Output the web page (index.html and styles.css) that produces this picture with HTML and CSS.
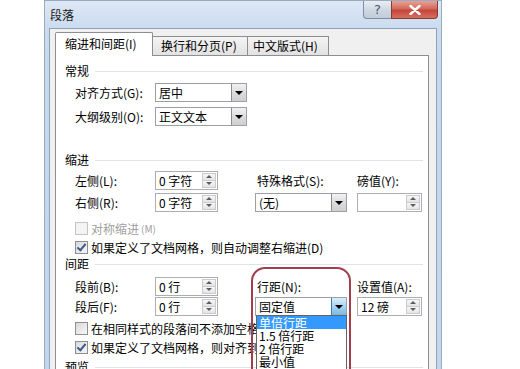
FILE: index.html
```html
<!DOCTYPE html>
<html>
<head>
  <meta charset="utf-8">
  <title>段落</title>
  <link rel="stylesheet" href="styles.css">
</head>
<body>
  <div class="window">
    <div class="titlebar">
      <span class="title">段落</span>
      <div class="caption">
        <span class="help">?</span>
        <span class="close">
          <svg width="12" height="10" viewBox="0 0 12 10"><path d="M1.5 1 L10.5 9 M10.5 1 L1.5 9" stroke="#fff" stroke-width="2.4" stroke-linecap="round"/></svg>
        </span>
      </div>
    </div>

    <div class="client">
      <div class="tabs">
        <div class="tab active">缩进和间距(I)</div>
        <div class="tab t2">换行和分页(P)</div>
        <div class="tab t3">中文版式(H)</div>
      </div>

      <div class="panel">
        <div class="group g1"><span>常规</span></div>
        <div class="row r24">
          <span class="lbl">对齐方式(G):</span>
          <div class="combo"><span>居中</span><i class="drop"></i></div>
        </div>
        <div class="row r24">
          <span class="lbl">大纲级别(O):</span>
          <div class="combo"><span>正文文本</span><i class="drop"></i></div>
        </div>

        <div class="group g2"><span>缩进</span></div>
        <div class="row r22 first">
          <span class="lbl">左侧(L):</span>
          <div class="c1"><div class="spin"><span>0 字符</span><i class="arrows"><b></b><b></b></i></div></div>
          <span class="c2 lbl2">特殊格式(S):</span>
          <span class="c3">磅值(Y):</span>
        </div>
        <div class="row r22">
          <span class="lbl">右侧(R):</span>
          <div class="c1"><div class="spin"><span>0 字符</span><i class="arrows"><b></b><b></b></i></div></div>
          <div class="c2"><div class="combo"><span>(无)</span><i class="drop"></i></div></div>
          <div class="c3"><div class="spin wide"><span></span><i class="arrows"><b></b><b></b></i></div></div>
        </div>
        <div class="check disabled cb-first"><i class="box"></i>对称缩进<small>(M)</small></div>
        <div class="check"><i class="box on"></i>如果定义了文档网格，则自动调整右缩进(D)</div>

        <div class="group g3"><span>间距</span></div>
        <div class="row r20 first2">
          <span class="lbl">段前(B):</span>
          <div class="c1"><div class="spin"><span>0 行</span><i class="arrows"><b></b><b></b></i></div></div>
          <span class="c2 lbl2">行距(N):</span>
          <span class="c3">设置值(A):</span>
        </div>
        <div class="row r20">
          <span class="lbl">段后(F):</span>
          <div class="c1"><div class="spin"><span>0 行</span><i class="arrows"><b></b><b></b></i></div></div>
          <div class="c2 holder">
            <div class="combo open"><span>固定值</span><i class="drop"></i></div>
            <ul class="list">
              <li class="sel">单倍行距</li>
              <li>1.5 倍行距</li>
              <li>2 倍行距</li>
              <li>最小值</li>
              <li>固定值</li>
            </ul>
          </div>
          <div class="c3"><div class="spin wide"><span>12 磅</span><i class="arrows"><b></b><b></b></i></div></div>
        </div>
        <div class="check cb-second"><i class="box"></i>在相同样式的段落间不添加空格(C)</div>
        <div class="check"><i class="box on"></i>如果定义了文档网格，则对齐到网格(W)</div>

        <div class="group g4"><span>预览</span></div>
      </div>
    </div>
  </div>

  <div class="mark"></div>
</body>
</html>
```

FILE: styles.css
```css
html, body {
  margin: 0;
  padding: 0;
  height: 100%;
  overflow: hidden;
  background: #fff;
  font-family: "Noto Sans CJK SC", "Liberation Sans", sans-serif;
  font-size: 12px;
  color: #000;
}

body {
  position: relative;
}

.window {
  margin-left: 44px;
  width: 398px;
  height: 420px;
  box-sizing: border-box;
  border: 1px solid #9aabbf;
  border-bottom: none;
  background: linear-gradient(to bottom, #dde8f5 0, #cbdcef 27px, #c6d8ec 60px, #c3d6eb 100%);
  display: flex;
  flex-direction: column;
}

.titlebar {
  height: 27px;
  display: flex;
  justify-content: space-between;
  align-items: flex-start;
  padding: 0 3px 0 5px;
}

.title {
  line-height: 27px;
  color: #1b1b1b;
}

.caption {
  display: flex;
}

.help, .close {
  height: 18px;
  box-sizing: border-box;
  display: flex;
  align-items: center;
  justify-content: center;
}

.help {
  width: 28px;
  border: 1px solid #7f8fa3;
  border-top: none;
  border-right: none;
  border-radius: 0 0 0 4px;
  background: linear-gradient(to bottom, #e9eef4, #cdd7e2 55%, #c0ccd9);
  color: #4b586a;
  font-size: 13px;
  font-family: "DejaVu Sans", sans-serif;
}

.close {
  width: 47px;
  border: 1px solid #8a3a34;
  border-top: none;
  border-radius: 0 0 4px 0;
  background: linear-gradient(to bottom, #e6a396, #d36a5b 45%, #c5463a 55%, #d4705f);
}

.client {
  flex: 1;
  margin: 0 4px;
  border: 1px solid #8ea2ba;
  border-bottom: none;
  background: #f0f0f0;
  padding: 3px 0 0 5px;
}

.tabs {
  height: 23px;
  display: flex;
  align-items: flex-end;
}

.tab {
  height: 19px;
  box-sizing: border-box;
  border: 1px solid #8c8e94;
  border-bottom: none;
  background: linear-gradient(to bottom, #f4f4f4, #e2e2e2);
  line-height: 18px;
  padding-left: 8px;
}

.tab.active {
  width: 98px;
  height: 24px;
  margin-bottom: -1px;
  background: #fff;
  padding-left: 9px;
  line-height: 21px;
  position: relative;
  z-index: 1;
  border-radius: 2px 2px 0 0;
}

.tab.t2 {
  width: 95px;
  border-left: none;
}

.tab.t3 {
  width: 81px;
  border-left: none;
  padding-left: 5px;
}

.panel {
  width: 374px;
  height: 380px;
  box-sizing: border-box;
  border: 1px solid #8c8e94;
  background: #fff;
}

.group {
  height: 14px;
  display: flex;
  align-items: center;
  margin: 0 5px 0 9px;
  line-height: 14px;
}

.group::after {
  content: "";
  flex: 1;
  height: 1px;
  margin-left: 6px;
  background: #dde3e8;
}

.g1 { margin-top: 8px; }
.g2 { margin-top: 25px; }
.g3 { margin-top: 0; }
.g4 { margin-top: 3px; }

.row {
  display: flex;
  align-items: center;
  padding-left: 19px;
}

.r24 { height: 24px; }
.r22 { height: 22px; }
.r20 { height: 20px; }
.r24:nth-of-type(2) { margin-top: 2px; }
.first { margin-top: 2px; }
.first2 { margin-top: 5px; }

.lbl {
  width: 80px;
  flex: none;
}

.c1 {
  width: 100px;
  flex: none;
}

.c2 {
  width: 102px;
  flex: none;
}

.lbl2 {
  padding-left: 2px;
  box-sizing: border-box;
}

.c3 {
  flex: none;
}

.combo {
  width: 92px;
  height: 19px;
  box-sizing: border-box;
  border: 1px solid #9c9fa5;
  background: #fff;
  display: flex;
}

.combo span {
  flex: 1;
  padding-left: 3px;
  line-height: 17px;
}

.drop {
  width: 15px;
  box-sizing: border-box;
  border-left: 1px solid #8a8d92;
  background: linear-gradient(to bottom, #f2f2f2, #dcdcdc 50%, #cfcfcf);
  display: flex;
  align-items: center;
  justify-content: center;
}

.drop::after {
  content: "";
  border-left: 4px solid transparent;
  border-right: 4px solid transparent;
  border-top: 4px solid #000;
  margin-top: 1px;
}

.combo.open .drop {
  border-left-color: #3c7fb1;
  background: linear-gradient(to bottom, #dbeefa, #a6d3f0 50%, #7cb8e4);
}

.spin {
  width: 63px;
  height: 19px;
  box-sizing: border-box;
  border: 1px solid #abadb3;
  background: #fff;
  display: flex;
}

.spin.wide {
  width: 65px;
}

.spin span {
  flex: 1;
  padding-left: 3px;
  line-height: 17px;
}

.arrows {
  width: 14px;
  margin: 1px 1px 1px 0;
  display: flex;
  flex-direction: column;
}

.arrows b {
  flex: 1;
  border: 1px solid #c9cbcf;
  background: linear-gradient(to bottom, #f7f7f7, #e4e4e4);
  display: flex;
  align-items: center;
  justify-content: center;
}

.arrows b + b {
  border-top: none;
}

.arrows b::after {
  content: "";
  border-left: 3px solid transparent;
  border-right: 3px solid transparent;
  border-bottom: 3px solid #5d5d5d;
}

.arrows b + b::after {
  border-bottom: none;
  border-top: 3px solid #5d5d5d;
}

.check {
  height: 19px;
  display: flex;
  align-items: center;
  padding-left: 19px;
  white-space: nowrap;
}

.cb-first { margin-top: 6px; }
.cb-second { margin-top: 3px; }

.box {
  width: 13px;
  height: 13px;
  box-sizing: border-box;
  border: 1px solid #8e8f8f;
  background: linear-gradient(135deg, #dadada, #f6f6f6);
  margin-right: 3px;
  flex: none;
  position: relative;
}

.box.on::after {
  content: "";
  position: absolute;
  left: 3px;
  top: 0;
  width: 3px;
  height: 7px;
  border: solid #3d5a8a;
  border-width: 0 2px 2px 0;
  transform: rotate(40deg);
}

.check.disabled {
  color: #a0a0a0;
}

.check.disabled .box {
  border-color: #c4c4c4;
  background: #f4f4f4;
}

.check small {
  font-size: 10px;
  margin-left: 2px;
}

.holder {
  position: relative;
}

.list {
  position: absolute;
  left: 1px;
  top: 18px;
  z-index: 2;
  width: 91px;
  height: 80px;
  margin: 0;
  padding: 0 0 0 0;
  box-sizing: border-box;
  border: 1px solid #646464;
  background: #fff;
  list-style: none;
}

.list li {
  height: 13px;
  line-height: 13px;
  padding-left: 2px;
  white-space: nowrap;
}

.list li.sel {
  background: #3399ff;
  color: #fff;
}

.mark {
  position: absolute;
  left: 251px;
  top: 267px;
  width: 100px;
  height: 140px;
  box-sizing: border-box;
  border: 2px solid #a53d4d;
  border-radius: 14px;
  z-index: 5;
}
```
